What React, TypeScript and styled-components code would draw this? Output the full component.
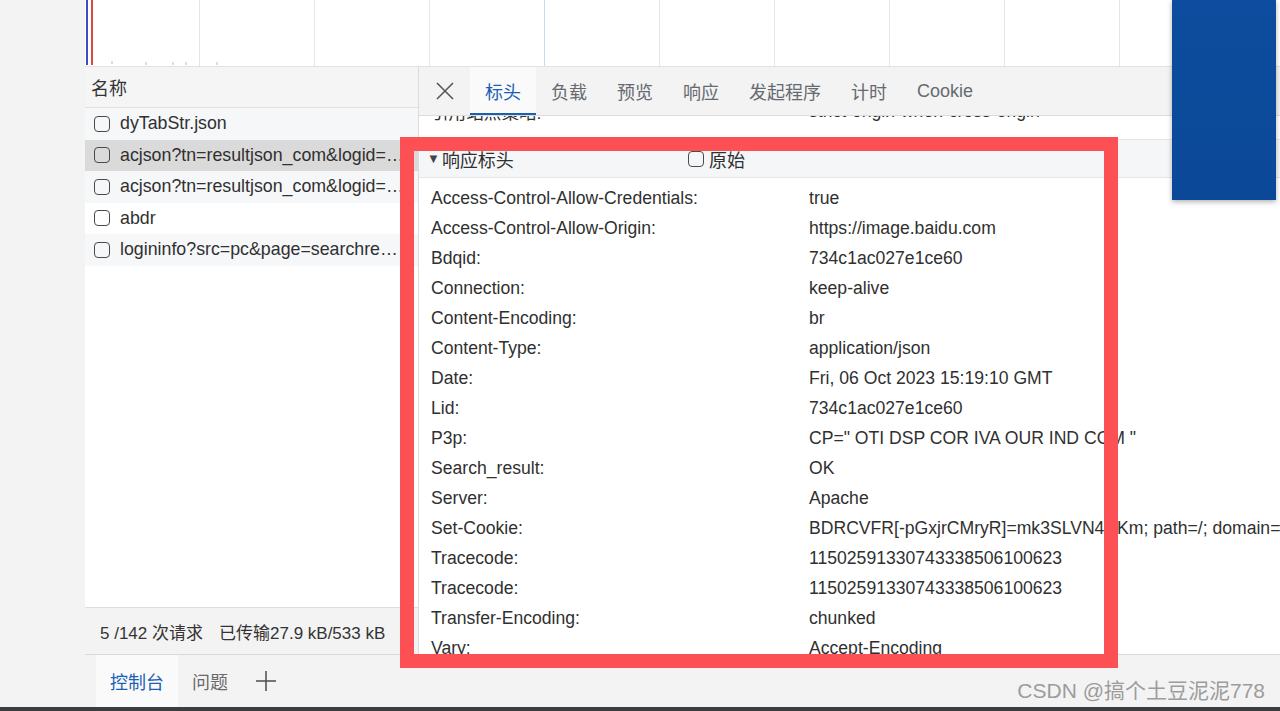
import React from "react";
import styled, { createGlobalStyle } from "styled-components";

const GlobalStyle = createGlobalStyle`
  html, body {
    margin: 0;
    padding: 0;
  }
  body {
    font-family: "Liberation Sans", "Noto Sans CJK SC", sans-serif;
    overflow: hidden;
  }
`;

const Screen = styled.div`
  position: relative;
  display: flex;
  width: 1280px;
  height: 711px;
  box-sizing: border-box;
  background: #f3f3f3;
  border-bottom: 4px solid #3b3d3f;
  overflow: hidden;
  color: #303030;
`;

const Gutter = styled.div`
  flex: 0 0 85px;
  background: #f3f3f3;
`;

const DevTools = styled.div`
  flex: 1;
  min-width: 0;
  display: flex;
  flex-direction: column;
`;

/* ---------- overview timeline ---------- */

const Timeline = styled.div`
  flex: 0 0 67px;
  display: flex;
  background: #ffffff;
  border-bottom: 1px solid #e2e2e2;
  box-sizing: border-box;
  overflow: hidden;
`;

const TimelineCell = styled.div<{ $accent?: boolean }>`
  position: relative;
  flex: 0 0 115px;
  box-sizing: border-box;
  border-right: 1px solid ${(p) => (p.$accent ? "#c9d9ef" : "#e6e6e6")};
`;

const Marker = styled.div<{ $color: string; $left: number }>`
  position: absolute;
  top: 0;
  bottom: 1px;
  left: ${(p) => p.$left}px;
  width: 2px;
  background: ${(p) => p.$color};
`;

const Tick = styled.div<{ $left: number; $top: number }>`
  position: absolute;
  left: ${(p) => p.$left}px;
  top: ${(p) => p.$top}px;
  width: 2px;
  height: 3px;
  background: #d3dfec;
`;

/* ---------- main split ---------- */

const Main = styled.div`
  flex: 1;
  min-height: 0;
  display: flex;
`;

const RequestsPanel = styled.div`
  flex: 0 0 334px;
  width: 334px;
  min-width: 0;
  overflow: hidden;
  display: flex;
  flex-direction: column;
  box-sizing: border-box;
  border-right: 1px solid #dcdcdc;
  background: #ffffff;
`;

const ListHeader = styled.div`
  flex: 0 0 41px;
  box-sizing: border-box;
  display: flex;
  align-items: center;
  padding-left: 6px;
  font-size: 18px;
  color: #333;
  background: #f5f5f5;
  border-bottom: 1px solid #e2e2e2;
`;

const RequestRow = styled.div<{ $tone: "plain" | "stripe" | "selected" }>`
  flex: 0 0 31.5px;
  display: flex;
  align-items: center;
  gap: 10px;
  padding-left: 9px;
  font-size: 17.8px;
  white-space: nowrap;
  overflow: hidden;
  background: ${(p) =>
    p.$tone === "selected" ? "#dadada" : p.$tone === "stripe" ? "#f6f7f9" : "#ffffff"};
`;

const Checkbox = styled.span<{ $size?: number }>`
  flex: 0 0 auto;
  width: ${(p) => p.$size ?? 16}px;
  height: ${(p) => p.$size ?? 16}px;
  box-sizing: border-box;
  border: 1.5px solid #4a4a4a;
  border-radius: 4px;
`;

const RequestName = styled.span`
  min-width: 0;
  overflow: hidden;
  text-overflow: ellipsis;
  padding-right: 12px;
`;

const ListFill = styled.div`
  flex: 1;
  background: #ffffff;
`;

const StatusBar = styled.div`
  flex: 0 0 47px;
  box-sizing: border-box;
  display: flex;
  align-items: center;
  gap: 16px;
  padding-left: 15px;
  font-size: 17px;
  color: #333;
  white-space: nowrap;
  overflow: hidden;
  background: #f3f3f3;
  border-top: 1px solid #dedede;
`;

const Divider = styled.span`
  color: #b5b5b5;
`;

/* ---------- detail panel ---------- */

const DetailPanel = styled.div`
  flex: 1;
  min-width: 0;
  display: flex;
  flex-direction: column;
  background: #ffffff;
`;

const TabBar = styled.div`
  flex: 0 0 49px;
  box-sizing: border-box;
  display: flex;
  align-items: stretch;
  background: #f3f3f3;
  border-bottom: 1px solid #dcdcdc;
`;

const CloseButton = styled.div`
  flex: 0 0 51px;
  display: flex;
  align-items: center;
  justify-content: center;
  color: #555;
`;

const Tab = styled.div<{ $active?: boolean }>`
  display: flex;
  align-items: center;
  padding: 0 15px;
  font-size: 18px;
  color: ${(p) => (p.$active ? "#1a5fb4" : "#666a70")};
  background: ${(p) => (p.$active ? "#fafafa" : "transparent")};
  box-shadow: ${(p) => (p.$active ? "inset 0 -2px 0 #1a5fb4" : "none")};
`;

const DetailBody = styled.div`
  flex: 1;
  min-height: 0;
  overflow: hidden;
  background: #ffffff;
`;

const ScrolledContent = styled.div`
  margin-top: -20px;
`;

const HeaderRow = styled.div`
  height: 30px;
  display: flex;
  align-items: center;
  padding-left: 12px;
  font-size: 17.6px;
  color: #303030;
  white-space: nowrap;
`;

const HeaderKey = styled.span`
  flex: 0 0 378px;
`;

const HeaderValue = styled.span``;

const SectionHeader = styled.div`
  margin-top: 13px;
  height: 39px;
  box-sizing: border-box;
  display: flex;
  align-items: center;
  padding-left: 8px;
  font-size: 18px;
  color: #303030;
  background: #f5f6f8;
  border-top: 1px solid #e6e6e6;
  border-bottom: 1px solid #e6e6e6;
`;

const SectionTitle = styled.span`
  flex: 0 0 261px;
  display: flex;
  align-items: center;
  gap: 2px;
`;

const Caret = styled.span`
  font-size: 13px;
  color: #444;
`;

const RawToggle = styled.span`
  display: flex;
  align-items: center;
  gap: 5px;
`;

const SectionRows = styled.div`
  padding-top: 5px;
`;

/* ---------- drawer ---------- */

const Drawer = styled.div`
  flex: 0 0 53px;
  box-sizing: border-box;
  display: flex;
  align-items: stretch;
  padding-left: 11px;
  background: #f3f3f3;
  border-top: 1px solid #dadada;
`;

const DrawerTab = styled.div<{ $active?: boolean }>`
  display: flex;
  align-items: center;
  padding: 0 14px;
  font-size: 18px;
  color: ${(p) => (p.$active ? "#1a5fb4" : "#6a6a6a")};
  background: ${(p) => (p.$active ? "#fafafa" : "transparent")};
`;

const AddButton = styled.div`
  flex: 0 0 48px;
  display: flex;
  align-items: center;
  justify-content: center;
  color: #555;
`;

const Watermark = styled.div`
  margin-left: auto;
  align-self: flex-end;
  padding: 0 15px 3px 0;
  font-size: 21px;
  line-height: 26px;
  color: #9c9c9c;
  white-space: nowrap;
`;

/* ---------- overlays ---------- */

const FloatingWindow = styled.div`
  position: absolute;
  left: 1172px;
  top: 0;
  width: 104px;
  height: 200px;
  background: linear-gradient(180deg, #0d4c9e 0%, #0b4897 100%);
  box-shadow: 0 2px 5px rgba(0, 0, 0, 0.3);
`;

const Highlight = styled.div`
  position: absolute;
  left: 400px;
  top: 137px;
  width: 718px;
  height: 531px;
  box-sizing: border-box;
  border: 14px solid #fc5055;
`;

const requests: { name: string; tone: "plain" | "stripe" | "selected" }[] = [
  { name: "dyTabStr.json", tone: "stripe" },
  { name: "acjson?tn=resultjson_com&logid=11502591330743338506100623", tone: "selected" },
  { name: "acjson?tn=resultjson_com&logid=11502591330743338506100623", tone: "stripe" },
  { name: "abdr", tone: "plain" },
  { name: "logininfo?src=pc&page=searchresult&time=1696605550", tone: "stripe" },
];

const tabs = ["标头", "负载", "预览", "响应", "发起程序", "计时", "Cookie"];

const responseHeaders: [string, string][] = [
  ["Access-Control-Allow-Credentials:", "true"],
  ["Access-Control-Allow-Origin:", "https://image.baidu.com"],
  ["Bdqid:", "734c1ac027e1ce60"],
  ["Connection:", "keep-alive"],
  ["Content-Encoding:", "br"],
  ["Content-Type:", "application/json"],
  ["Date:", "Fri, 06 Oct 2023 15:19:10 GMT"],
  ["Lid:", "734c1ac027e1ce60"],
  ["P3p:", 'CP=" OTI DSP COR IVA OUR IND COM "'],
  ["Search_result:", "OK"],
  ["Server:", "Apache"],
  ["Set-Cookie:", "BDRCVFR[-pGxjrCMryR]=mk3SLVN4HKm; path=/; domain=.baidu.com"],
  ["Tracecode:", "11502591330743338506100623"],
  ["Tracecode:", "11502591330743338506100623"],
  ["Transfer-Encoding:", "chunked"],
  ["Vary:", "Accept-Encoding"],
];

const CloseIcon = () => (
  <svg width="20" height="20" viewBox="0 0 20 20" fill="none" stroke="currentColor" strokeWidth="1.6">
    <line x1="2" y1="2" x2="18" y2="18" />
    <line x1="18" y1="2" x2="2" y2="18" />
  </svg>
);

const PlusIcon = () => (
  <svg width="22" height="22" viewBox="0 0 22 22" fill="none" stroke="currentColor" strokeWidth="1.6">
    <line x1="11" y1="1" x2="11" y2="21" />
    <line x1="1" y1="11" x2="21" y2="11" />
  </svg>
);

export default function App() {
  return (
    <Screen>
      <GlobalStyle />
      <Gutter />
      <DevTools>
        <Timeline>
          {Array.from({ length: 11 }).map((_, i) => (
            <TimelineCell key={i} $accent={i === 3}>
              {i === 0 && (
                <>
                  <Marker $color="#3a4fc2" $left={1} />
                  <Marker $color="#e0483c" $left={6} />
                  <Tick $left={26} $top={61} />
                  <Tick $left={60} $top={62} />
                  <Tick $left={87} $top={62} />
                  <Tick $left={100} $top={62} />
                </>
              )}
              {i === 1 && <Tick $left={16} $top={62} />}
            </TimelineCell>
          ))}
        </Timeline>

        <Main>
          <RequestsPanel>
            <ListHeader>名称</ListHeader>
            {requests.map((r, i) => (
              <RequestRow key={i} $tone={r.tone}>
                <Checkbox />
                <RequestName>{r.name}</RequestName>
              </RequestRow>
            ))}
            <ListFill />
            <StatusBar>
              <span>5 /142 次请求</span>
              <span>已传输27.9 kB/533 kB</span>
              <Divider>|</Divider>
              <span>5.9 MB/7.8 MB</span>
            </StatusBar>
          </RequestsPanel>

          <DetailPanel>
            <TabBar>
              <CloseButton>
                <CloseIcon />
              </CloseButton>
              {tabs.map((t, i) => (
                <Tab key={t} $active={i === 0}>
                  {t}
                </Tab>
              ))}
            </TabBar>
            <DetailBody>
              <ScrolledContent>
                <HeaderRow>
                  <HeaderKey>引用站点策略:</HeaderKey>
                  <HeaderValue>strict-origin-when-cross-origin</HeaderValue>
                </HeaderRow>
                <SectionHeader>
                  <SectionTitle>
                    <Caret>▼</Caret>
                    响应标头
                  </SectionTitle>
                  <RawToggle>
                    <Checkbox $size={16} />
                    原始
                  </RawToggle>
                </SectionHeader>
                <SectionRows>
                  {responseHeaders.map(([k, v], i) => (
                    <HeaderRow key={i}>
                      <HeaderKey>{k}</HeaderKey>
                      <HeaderValue>{v}</HeaderValue>
                    </HeaderRow>
                  ))}
                </SectionRows>
              </ScrolledContent>
            </DetailBody>
          </DetailPanel>
        </Main>

        <Drawer>
          <DrawerTab $active>控制台</DrawerTab>
          <DrawerTab>问题</DrawerTab>
          <AddButton>
            <PlusIcon />
          </AddButton>
          <Watermark>CSDN @搞个土豆泥泥778</Watermark>
        </Drawer>
      </DevTools>

      <FloatingWindow />
      <Highlight />
    </Screen>
  );
}
